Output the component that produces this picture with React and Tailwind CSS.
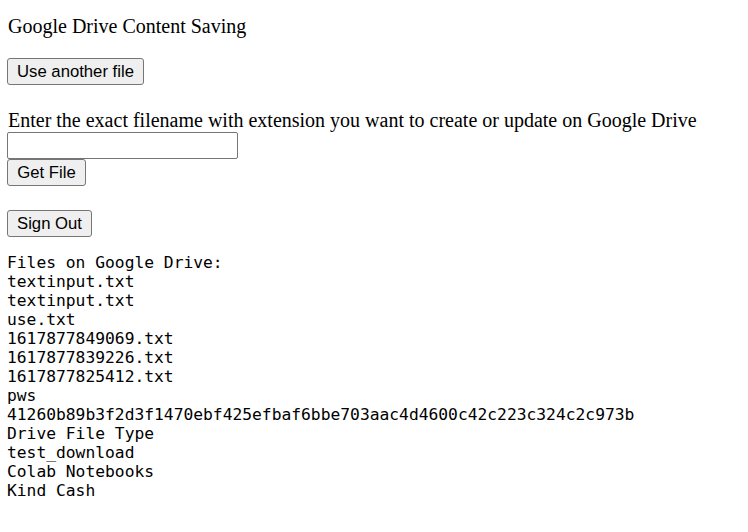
import React from 'react';

const files = [
  'textinput.txt',
  'textinput.txt',
  'use.txt',
  '1617877849069.txt',
  '1617877839226.txt',
  '1617877825412.txt',
  'pws',
  '41260b89b3f2d3f1470ebf425efbaf6bbe703aac4d4600c42c223c324c2c973b',
  'Drive File Type',
  'test_download',
  'Colab Notebooks',
  'Kind Cash',
];

function Btn({ children, className = '' }) {
  return (
    <button
      className={`h-[27px] rounded-[3px] border border-[#767676] bg-[#efefef] text-[16.7px] leading-[18px] text-black font-['Liberation_Sans',Arial,sans-serif] flex items-center justify-center ${className}`}
    >
      {children}
    </button>
  );
}

export default function App() {
  return (
    <div className="min-h-[532px] bg-white px-[7px] pb-[8px] text-black font-['Liberation_Serif','Times_New_Roman',serif]">
      <p className="pt-[16px] text-[20px] leading-[20px] pl-[1px]">Google Drive Content Saving</p>

      <Btn className="mt-[22px] w-[137px]">Use another file</Btn>

      <p className="mt-[25px] text-[20px] leading-[21px] pl-[1px]">
        Enter the exact filename with extension you want to create or update on Google Drive
      </p>
      <input
        type="text"
        className="block mt-[1px] h-[27px] w-[231px] rounded-[2px] border border-[#767676] bg-white"
      />
      <Btn className="w-[79px]">Get File</Btn>

      <Btn className="mt-[24px] w-[85px]">Sign Out</Btn>

      <div className="mt-[16px] font-['DejaVu_Sans_Mono',monospace] text-[16.3px] leading-[19px]">
        <div>Files on Google Drive:</div>
        {files.map((f, i) => (
          <div key={i}>{f}</div>
        ))}
      </div>
    </div>
  );
}
